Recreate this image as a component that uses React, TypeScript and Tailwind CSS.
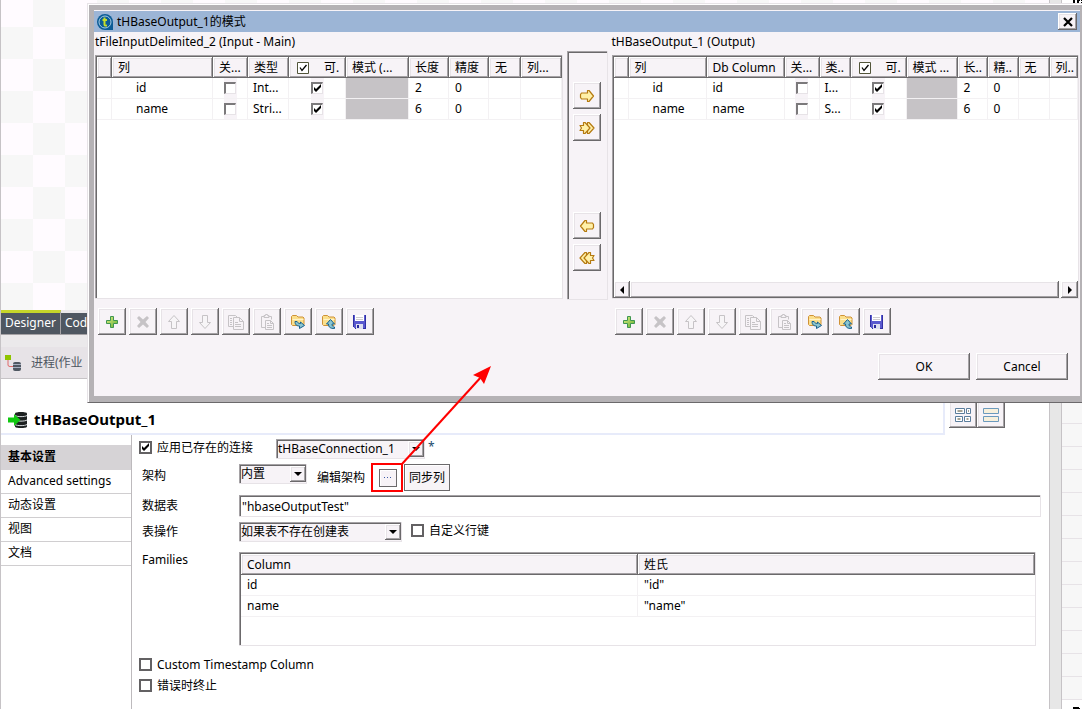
import React, { useState } from "react";

const raised =
  "bg-[#f7f3f7] shadow-[inset_-1px_-1px_#6b696b,inset_1px_1px_#ffffff,inset_-2px_-2px_#a5a2a5,inset_2px_2px_#e7e3e7]";
const sunken =
  "shadow-[inset_-1px_-1px_#e7e3e7,inset_1px_1px_#a5a2a5,inset_2px_2px_#6b696b]";

function CheckBox({ on = false, bold = false, id, label }: { on?: boolean; bold?: boolean; id?: string; label?: string }) {
  const [checked, setChecked] = useState(on);
  return (
    <span className="inline-grid shrink-0">
      <input
        id={id}
        type="checkbox"
        aria-label={label}
        checked={checked}
        onChange={() => setChecked(!checked)}
        className={
          bold
            ? "[grid-area:1/1] size-[13px] appearance-none border-2 border-[#636163] bg-white"
            : "[grid-area:1/1] size-[12px] appearance-none bg-white border-t-2 border-l-2 border-r border-b border-t-[#7b797b] border-l-[#7b797b] border-r-[#e7e3e7] border-b-[#e7e3e7]"
        }
      />
      {checked && (
        <svg viewBox="0 0 12 12" className="pointer-events-none [grid-area:1/1] size-3">
          <path d="M3 5v3l2 2 5-5V2L5 7z" fill="#000" />
        </svg>
      )}
    </span>
  );
}

function Plus() {
  return (
    <svg viewBox="0 0 16 16" className="size-4">
      <defs>
        <linearGradient id="plusFill" x1="0" y1="0" x2="1" y2="1">
          <stop offset="0" stopColor="#e4f08a" />
          <stop offset="1" stopColor="#5fae2c" />
        </linearGradient>
      </defs>
      <path d="M6.500 2.500h3v4h4v3h-4v4h-3v-4h-4v-3h4z" fill="url(#plusFill)" stroke="#3f9650" />
    </svg>
  );
}
function Cross() {
  return (
    <svg viewBox="0 0 16 16" className="size-4">
      <path d="M4 2l4 3.500L12 2l2 2-3.500 4 3.500 4-2 2-4-3.500L4 14l-2-2 3.500-4L2 4z" fill="#c6c3c6" />
    </svg>
  );
}
function Up() {
  return (
    <svg viewBox="0 0 16 16" className="size-4">
      <path d="M8 1.500l5.500 6h-3v7h-5v-7h-3z" fill="#f7f5f7" stroke="#c6c3c6" />
    </svg>
  );
}
function Down() {
  return (
    <svg viewBox="0 0 16 16" className="size-4">
      <path d="M8 14.500l5.500-6h-3v-7h-5v7h-3z" fill="#f7f5f7" stroke="#c6c3c6" />
    </svg>
  );
}
function Copy() {
  return (
    <svg viewBox="0 0 16 16" className="size-4" fill="none" stroke="#c6c3c6">
      <path d="M5.500 12.500h-5v-11h7l2 2" />
      <path d="M5.500 3.500h6l4 4v8h-10zM11.500 3.500v4h4M7 8.500h3M7 10.500h6M7 12.500h6M2 4.500h2M2 6.500h2M2 8.500h2M2 10.500h2" />
    </svg>
  );
}
function Paste() {
  return (
    <svg viewBox="0 0 16 16" className="size-4" fill="none" stroke="#c6c3c6">
      <path d="M6 13.500H2.500v-11h3M9.500 2.500h3v3M5 3.500v-2h1.500v-1h2v1H10v2z" />
      <path d="M6.500 6.500h5l3 3v6h-8zM11.500 6.500v3h3M8 9.500h2M8 11.500h5M8 13.500h5" />
    </svg>
  );
}
function FolderBase() {
  return <path d="M1.500 10.500v-8l1-1h4l1.500 1.500h5l1 1v6.500l-1 1H2.500z" fill="#fbdf8c" stroke="#cf9237" />;
}
function Import() {
  return (
    <svg viewBox="0 0 16 16" className="size-4">
      <FolderBase />
      <path d="M2.500 5.500h11" stroke="#fff3c8" />
      <path d="M5 7.500c0 3.500 2 4.500 4.500 4.500v2.500L14.500 11.500 10.500 8v1.500C8.500 9.500 7.500 8.500 7 7.500z" fill="#8cc5cf" stroke="#17608f" />
    </svg>
  );
}
function Export() {
  return (
    <svg viewBox="0 0 16 16" className="size-4">
      <FolderBase />
      <path d="M2.500 5.500h11" stroke="#fff3c8" />
      <path d="M13.500 14.500c-4 0-6-1-6-4.500H5.500l4-4.500 4 4.500h-2.500c0 2 1 3 2.500 3z" fill="#8cc5cf" stroke="#17608f" />
    </svg>
  );
}
function Save() {
  return (
    <svg viewBox="0 0 16 16" className="size-4" shapeRendering="crispEdges">
      <path d="M1 1h13v14H3l-2-2z" fill="#5a59ce" />
      <path d="M1 1h1v12H1zM13 1h1v14h-1zM3 14h11v1H3z" fill="#3130a5" />
      <path d="M3 1h9v6H3z" fill="#fff" />
      <path d="M4 3h7v1H4zM4 5h7v1H4z" fill="#cecbce" />
      <path d="M4 10h7v5H4z" fill="#dedfef" />
      <path d="M5 11h2v3H5z" fill="#29289c" />
    </svg>
  );
}

function Arrow({ left = false, double = false }: { left?: boolean; double?: boolean }) {
  return (
    <svg viewBox="0 0 16 16" className={left ? "size-4 -scale-x-100" : "size-4"} strokeWidth="1.200" strokeLinejoin="round">
      {double ? (
        <g fill="#fff0a8" stroke="#b57a10">
          <path d="M8.500 4V2.500h1.500L15 8l-5 5.500H8.500V12z" />
          <path d="M1 5.500h3.500v-3H6L11 8l-5 5.500H4.500v-3H1L2.500 8z" />
        </g>
      ) : (
        <path d="M1.500 6.500l1-1.500h6V2.500h1.500l4.500 5.500-4.500 5.500H8.500V11h-6l-1-1.500z" fill="#fff0a8" stroke="#b57a10" />
      )}
    </svg>
  );
}

const tools: [string, () => React.JSX.Element, boolean][] = [
  ["Add", Plus, false],
  ["Remove", Cross, true],
  ["Move up", Up, true],
  ["Move down", Down, true],
  ["Copy", Copy, true],
  ["Paste", Paste, true],
  ["Import", Import, false],
  ["Export", Export, false],
  ["Save", Save, false],
];

function Toolbar() {
  return (
    <div className="flex gap-[3px] pl-[3px] pt-[9px]">
      {tools.map(([name, Icon, off]) => (
        <button key={name} aria-label={name} disabled={off} className={`grid h-[27px] w-7 place-items-center ${raised}`}>
          <Icon />
        </button>
      ))}
    </div>
  );
}

type Col = { key: string; head: string; width: string };

const inputCols: Col[] = [
  { key: "mark", head: "", width: "w-[15px]" },
  { key: "name", head: "列", width: "w-[101px]" },
  { key: "key", head: "关...", width: "w-[35px]" },
  { key: "type", head: "类型", width: "w-[41px]" },
  { key: "nullable", head: "可.", width: "w-[57px]" },
  { key: "pattern", head: "模式 (...", width: "w-[63px]" },
  { key: "length", head: "长度", width: "w-[40px]" },
  { key: "precision", head: "精度", width: "w-[40px]" },
  { key: "def", head: "无", width: "w-[32px]" },
  { key: "comment", head: "列...", width: "w-auto" },
];
const outputCols: Col[] = [
  { key: "mark", head: "", width: "w-[15px]" },
  { key: "name", head: "列", width: "w-[78px]" },
  { key: "db", head: "Db Column", width: "w-[78px]" },
  { key: "key", head: "关...", width: "w-[35px]" },
  { key: "type", head: "类..", width: "w-[31px]" },
  { key: "nullable", head: "可.", width: "w-[56px]" },
  { key: "pattern", head: "模式 ...", width: "w-[51px]" },
  { key: "length", head: "长..", width: "w-[30px]" },
  { key: "precision", head: "精..", width: "w-[31px]" },
  { key: "def", head: "无", width: "w-[31px]" },
  { key: "comment", head: "列..", width: "w-auto" },
];

function SchemaTable({ cols, rows }: { cols: Col[]; rows: Record<string, string>[] }) {
  return (
    <table className="w-full table-fixed border-separate border-spacing-0 text-left">
      <thead>
        <tr>
          {cols.map((c) => (
            <th key={c.key} className={`h-[21px] overflow-hidden whitespace-nowrap p-0 pl-1.5 font-normal ${c.width} ${raised}`}>
              {c.key === "nullable" ? (
                <span className="flex items-center gap-[15px] pl-0.5">
                  <svg viewBox="0 0 12 12" className="size-3 shrink-0">
                    <path d="M.5.5h11v11H.5z" fill="#fff" stroke="#52553a" />
                    <path d="M3 5.500l2 3 4.500-5.500" fill="none" stroke="#000" strokeWidth="1.300" />
                  </svg>
                  {c.head}
                </span>
              ) : (
                c.head
              )}
            </th>
          ))}
        </tr>
      </thead>
      <tbody>
        {rows.map((r) => (
          <tr key={r.name}>
            {cols.map((c) => (
              <td
                key={c.key}
                className={`h-[21px] overflow-hidden whitespace-nowrap border-b border-r border-[#f3f1f3] p-0 leading-5 ${
                  c.key === "name" ? "pl-6" : c.key === "type" ? "pl-[5px]" : c.key === "key" || c.key === "nullable" ? "" : "pl-1.5"
                } ${c.key === "pattern" ? "bg-[#c6c3c6]" : ""}`}
              >
                {c.key === "key" || c.key === "nullable" ? (
                  <span className="mx-auto grid h-5 w-[13px] place-items-center bg-[#f7f3f7]">
                    <CheckBox on={c.key === "nullable"} label={`${r.name} ${c.key}`} />
                  </span>
                ) : (
                  r[c.key]
                )}
              </td>
            ))}
          </tr>
        ))}
      </tbody>
    </table>
  );
}

function Dialog() {
  return (
    <section
      role="dialog"
      aria-label="tHBaseOutput_1的模式"
      className="absolute left-[86px] right-0 top-[3px] border-l border-t border-b border-l-[#e7e3e7] border-t-[#e7e3e7] border-b-[#6b696b]"
    >
      <div className="border-l border-t border-white bg-[#b5b2b5] pb-[6px] pl-[5px] pr-[2px] pt-[5px]">
        <div className="border-t border-[#f7f3f7] bg-[#f7f3f7]">
          <header className="flex h-[21px] items-center bg-[#9cb5d6] pl-[3px] pr-[3px]">
            <svg viewBox="0 0 16 16" className="mr-1 size-4">
              <path d="M8 0a8 8 0 0 1 8 8v8H8A8 8 0 0 1 8 0z" fill="#0b5c97" />
              <circle cx="8" cy="8" r="6" fill="none" stroke="#a6cbe2" strokeWidth="1" />
              <path d="M7.500 3.500v7q0 1.500 2.500 1M5.500 6h4.500" fill="none" stroke="#c6de2a" strokeWidth="2" />
            </svg>
            <h2>tHBaseOutput_1的模式</h2>
            <button aria-label="Close" className={`ml-auto grid h-[17px] w-[19px] place-items-center ${raised}`}>
              <svg viewBox="0 0 10 10" className="size-2.5">
                <path d="M1 1l8 8M9 1L1 9" stroke="#000" strokeWidth="2.200" />
              </svg>
            </button>
          </header>
          <div className="grid grid-cols-[1fr_41px_1fr] gap-x-1 pl-px pr-px">
            <div className="min-w-0">
              <h3 className="h-[23px] leading-5">tFileInputDelimited_2 (Input - Main)</h3>
              <div className={`h-[244px] bg-white p-0.5 pr-px ${sunken}`}>
                <SchemaTable
                  cols={inputCols}
                  rows={[
                    { name: "id", type: "Int...", length: "2", precision: "0" },
                    { name: "name", type: "Stri...", length: "6", precision: "0" },
                  ]}
                />
              </div>
              <Toolbar />
            </div>
            <div className={`mt-[19px] flex h-[249px] flex-col items-center gap-[5px] pt-[31px] ${sunken}`}>
              <button aria-label="Copy to output" className={`grid h-[27px] w-7 place-items-center ${raised}`}>
                <Arrow />
              </button>
              <button aria-label="Copy all to output" className={`grid h-[27px] w-7 place-items-center ${raised}`}>
                <Arrow double />
              </button>
              <button aria-label="Copy to input" className={`mt-[66px] grid h-[27px] w-7 place-items-center ${raised}`}>
                <Arrow left />
              </button>
              <button aria-label="Copy all to input" className={`grid h-[27px] w-7 place-items-center ${raised}`}>
                <Arrow left double />
              </button>
            </div>
            <div className="min-w-0">
              <h3 className="h-[23px] leading-5">tHBaseOutput_1 (Output)</h3>
              <div className={`flex h-[244px] flex-col bg-white p-0.5 pb-px pr-px ${sunken}`}>
                <SchemaTable
                  cols={outputCols}
                  rows={[
                    { name: "id", db: "id", type: "I...", length: "2", precision: "0" },
                    { name: "name", db: "name", type: "S...", length: "6", precision: "0" },
                  ]}
                />
                <div className="mt-auto flex h-[17px] bg-[#fbf9fb]">
                  <button aria-label="Scroll left" className={`grid w-4 place-items-center ${raised}`}>
                    <svg viewBox="0 0 8 8" className="size-2">
                      <path d="M6 0v8L2 4z" />
                    </svg>
                  </button>
                  <div className={`mr-0.5 flex-1 ${raised}`} />
                  <button aria-label="Scroll right" className={`grid w-[17px] place-items-center ${raised}`}>
                    <svg viewBox="0 0 8 8" className="size-2">
                      <path d="M2 0v8l4-4z" />
                    </svg>
                  </button>
                </div>
              </div>
              <Toolbar />
            </div>
          </div>
          <footer className="flex justify-end gap-1.5 pb-4 pr-3 pt-[18px]">
            <button className={`h-[27px] w-[92px] ${raised}`}>OK</button>
            <button className={`h-[27px] w-[92px] ${raised}`}>Cancel</button>
          </footer>
        </div>
      </div>
    </section>
  );
}

function Select({ value, width, id, label }: { value: string; width: string; id?: string; label?: string }) {
  return (
    <span className={`grid h-5 shrink-0 bg-[#f7f3f7] p-0.5 pr-px ${width} ${sunken}`}>
      <select id={id} aria-label={label} className="[grid-area:1/1] min-w-0 appearance-none bg-transparent leading-4">
        <option>{value}</option>
      </select>
      <span className={`pointer-events-none grid w-4 place-items-center justify-self-end [grid-area:1/1] ${raised}`}>
        <svg viewBox="0 0 8 4" className="h-1 w-2">
          <path d="M0 0h8L4 4z" />
        </svg>
      </span>
    </span>
  );
}

const row = "grid grid-cols-[100px_1fr]";
const sections = ["基本设置", "Advanced settings", "动态设置", "视图", "文档"];

export default function App() {
  return (
    <div className='relative flex h-screen overflow-hidden border-l border-[#c6c3c6] bg-white font-["Noto_Sans","Noto_Sans_CJK_SC",sans-serif] text-[12px] leading-4 text-black'>
      <main className="flex min-w-0 flex-1 flex-col">
        <div className="h-[310px] shrink-0 bg-[conic-gradient(#f7f7f7_25%,#fffbff_25%_50%,#f7f7f7_50%_75%,#fffbff_75%)] bg-size-[64px_64px] bg-position-[0px_-5px]" />
        <nav className="flex h-[37px] shrink-0 items-start bg-[#ebe9eb] text-white">
          <button className="h-[25px] border-r border-t-[3px] border-b border-r-[#a5a2a5] border-b-[#a5a2a5] border-t-[#c6d62a] bg-[#4f5761] pb-0.5 pl-1 pr-1">
            Designer
          </button>
          <button className="mt-[3px] h-[22px] border-b border-[#a5a2a5] bg-[#4f5761] pb-0.5 pl-1 pr-1">Code</button>
        </nav>
        <div className="flex h-8 shrink-0 items-center border-b border-[#c6c3c6] bg-[#e7e3e7] pl-1 text-[#4f5761]">
          <svg viewBox="0 0 16 16" className="mr-2.5 size-4">
            <path d="M0 0h6v5H0z" fill="#8fc400" />
            <path d="M3 5v5q0 1.500 2 1.500h4" fill="none" stroke="#e06a6a" />
            <rect x="8" y="7" width="8" height="9" rx="2" fill="#4f5761" />
            <path d="M8 9.500h8M8 12.500h8" stroke="#a8afc0" />
          </svg>
          进程(作业
        </div>
        <div className="flex h-14 shrink-0">
          <div className="flex flex-1 items-center border-b-2 border-r-2 border-[#e7ebfa] pl-[7px] pt-[27px]">
            <svg viewBox="0 0 20 18" className="mr-[6px] h-[18px] w-5">
              <path d="M7 2.500C7 .5 19 .5 19 2.500v13c0 2-12 2-12 0z" fill="#1c2020" />
              <path d="M7 4.500c2 1.500 10 1.500 12 0M7 9c2 1.500 10 1.500 12 0M7 13.500c2 1.500 10 1.500 12 0" fill="none" stroke="#d6dbde" />
              <path d="M0 6.500h6V3l6.500 6L6 15v-3.500H0z" fill="#10c810" />
            </svg>
            <h1 className="pb-0.5 text-[15px] font-bold leading-5">tHBaseOutput_1</h1>
          </div>
          <div className="ml-1 mr-11 flex h-[49px] items-stretch">
            <button aria-label="Table view" className={`grid w-7 items-end justify-center pb-[6px] ${raised}`}>
              <svg viewBox="0 0 16 14" className="h-3.5 w-4" fill="#fff" stroke="#5a7d9c">
                <path d="M.5.5h9v5h-9zM11.500.5h4v5h-4zM.5 8.500h7v5h-7zM9.500 8.500h6v5h-6z" />
                <path d="M2.500 3h5M13 3h1M2.500 11h3M11.500 11h2" stroke="#a5a294" strokeWidth="2" />
              </svg>
            </button>
            <button aria-label="List view" className={`grid w-7 items-end justify-center pb-[6px] ${raised}`}>
              <svg viewBox="0 0 16 14" className="h-3.5 w-4" fill="#f7f0dc" stroke="#6b9abd">
                <path d="M.5.5h15v5H.5zM.5 8.500h15v5H.5z" />
              </svg>
            </button>
          </div>
        </div>
        <div className="flex min-h-0 flex-1">
          <ul className="w-[131px] shrink-0 border-r border-[#bdbabd] pt-[10px]">
            {sections.map((s, i) => (
              <li key={s} className={i === 0 ? "bg-[#d6d3d6] font-bold" : "border-b border-[#d0ced0]"}>
                <button className={i === 0 ? "h-[25px] w-full pb-0.5 pl-[7px] text-left" : "h-[23px] w-full pb-0.5 pl-[7px] text-left"}>{s}</button>
              </li>
            ))}
          </ul>
          <form className="min-w-0 flex-1 pl-[7px] pr-2 pt-1">
            <div className="flex h-5 items-center">
              <span className="flex w-[137px] items-center pb-[3px]">
                <CheckBox on bold id="reuse" />
                <label htmlFor="reuse" className="pl-[5px]">应用已存在的连接</label>
              </span>
              <Select value="tHBaseConnection_1" width="w-[149px]" label="Connection" />
              <span className="self-start pl-[3px] text-[#21496b]">*</span>
            </div>
            <div className={`${row} mt-[5px] h-[27px]`}>
              <label htmlFor="schema" className="pl-[3px] pt-1">架构</label>
              <div className="flex">
                <Select id="schema" value="内置" width="w-[68px]" />
                <span className="ml-2.5 self-center">编辑架构</span>
                <button type="button" aria-label="Edit schema" className="ml-[14px] grid size-[18px] place-items-center self-center border border-[#6b696b] bg-[#f7f3f7] shadow-[inset_1px_1px_#ffffff]">
                  <svg viewBox="0 0 8 2" className="h-0.5 w-2">
                    <path d="M0 0h1v1H0zM3 0h1v1H3zM6 0h1v1H6z" fill="#3a5aa5" />
                  </svg>
                </button>
                <button type="button" className="ml-[7px] w-[46px] border border-[#6b696b] bg-[#f7f3f7] shadow-[inset_1px_1px_#ffffff]">同步列</button>
              </div>
            </div>
            <div className={`${row} mt-1 h-[22px] items-center`}>
              <label htmlFor="table" className="pl-[3px]">数据表</label>
              <input id="table" defaultValue={'"hbaseOutputTest"'} className={`h-[22px] w-full bg-white pl-[3px] ${sunken}`} />
            </div>
            <div className={`${row} mt-[5px] h-5 items-center`}>
              <label htmlFor="action" className="pl-[3px]">表操作</label>
              <div className="flex items-center">
                <Select id="action" value="如果表不存在创建表" width="w-[163px]" />
                <span className="ml-[9px] flex items-center gap-[5px] pb-[3px]">
                  <CheckBox bold id="rowkey" />
                  <label htmlFor="rowkey">自定义行键</label>
                </span>
              </div>
            </div>
            <div className={`${row} mt-2.5`}>
              <span className="pl-[3px]">Families</span>
              <div className={`mr-[5px] h-[94px] p-0.5 pr-px ${sunken}`}>
                <table className="w-full table-fixed border-separate border-spacing-0 text-left leading-5">
                  <thead>
                    <tr>
                      <th className={`h-[21px] p-0 pl-1.5 font-normal ${raised}`}>Column</th>
                      <th className={`h-[21px] p-0 pl-1.5 font-normal ${raised}`}>姓氏</th>
                    </tr>
                  </thead>
                  <tbody>
                    {["id", "name"].map((n) => (
                      <tr key={n}>
                        <td className="h-[21px] border-b border-r border-[#f3f1f3] p-0 pl-1.5">{n}</td>
                        <td className="h-[21px] border-b border-[#f3f1f3] p-0 pl-1.5">{`"${n}"`}</td>
                      </tr>
                    ))}
                  </tbody>
                </table>
              </div>
            </div>
            <div className="mt-3 flex h-[13px] items-center gap-[5px]">
              <CheckBox bold id="stamp" />
              <label htmlFor="stamp">Custom Timestamp Column</label>
            </div>
            <div className="mt-2 flex h-[13px] items-center gap-[5px]">
              <CheckBox bold id="die" />
              <label htmlFor="die">错误时终止</label>
            </div>
          </form>
        </div>
      </main>
      <div className="w-[13px] shrink-0 border-x border-[#c6c3c6] bg-[#e7e7e7]" />
      <aside className="flex w-5 shrink-0 flex-col">
        <div className="h-2.5 shrink-0">
          <svg viewBox="0 0 12 3" className="ml-2.5 h-[3px] w-3">
            <path d="M1 0h2v3H1zM5 0h3v1H5zM5 1h2v2H5zM9 0h3v1H9zM9 2h3v1H9z" />
          </svg>
        </div>
        {Array.from({ length: 30 }, (_, i) => (
          <div key={i} className="h-[23px] shrink-0 border-b border-[#e7e3e7] bg-[#f7f7f7]" />
        ))}
        <svg viewBox="0 0 7 2" className="ml-[11px] mt-[7px] h-0.5 w-[7px] shrink-0">
          <path d="M0 0h6v1h1v1H0z" />
        </svg>
      </aside>

      <Dialog />

      <svg viewBox="0 0 122 130" className="pointer-events-none absolute left-[369px] top-[363px] h-[130px] w-[122px]">
        <path d="M2 101h30v27H2z" fill="none" stroke="#ff0000" strokeWidth="2" />
        <path d="M32 101L112 13" stroke="#ff0000" strokeWidth="2" />
        <path d="M121 3l-7 18-4-6-7-3z" fill="#ff0000" />
      </svg>
    </div>
  );
}
